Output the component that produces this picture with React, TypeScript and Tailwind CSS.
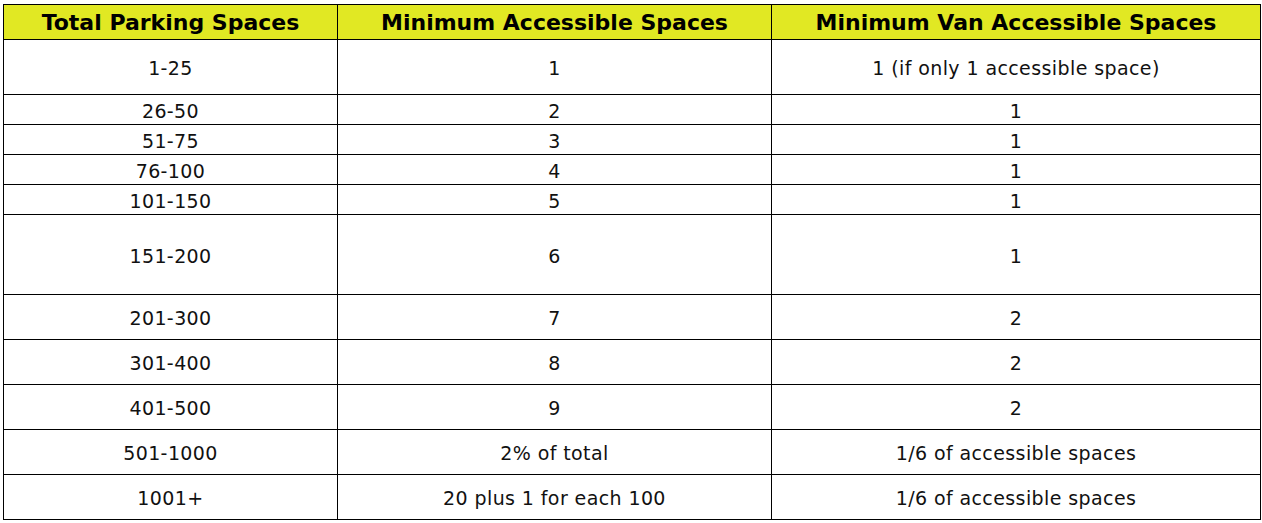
import React from "react";

const rows: { a: string; b: string; c: string; h: string }[] = [
  { a: "1-25", b: "1", c: "1 (if only 1 accessible space)", h: "h-[55px]" },
  { a: "26-50", b: "2", c: "1", h: "h-[30px]" },
  { a: "51-75", b: "3", c: "1", h: "h-[30px]" },
  { a: "76-100", b: "4", c: "1", h: "h-[30px]" },
  { a: "101-150", b: "5", c: "1", h: "h-[30px]" },
  { a: "151-200", b: "6", c: "1", h: "h-[80px]" },
  { a: "201-300", b: "7", c: "2", h: "h-[45px]" },
  { a: "301-400", b: "8", c: "2", h: "h-[45px]" },
  { a: "401-500", b: "9", c: "2", h: "h-[45px]" },
  { a: "501-1000", b: "2% of total", c: "1/6 of accessible spaces", h: "h-[45px]" },
  { a: "1001+", b: "20 plus 1 for each 100", c: "1/6 of accessible spaces", h: "h-[45px]" },
];

export default function App() {
  return (
    <div className="w-[1262px] h-[523px] bg-white pt-[4px] pl-[3px] font-['DejaVu_Sans',sans-serif] text-[#111]">
      <table className="border-collapse w-[1257px] table-fixed">
        <colgroup>
          <col className="w-[334px]" />
          <col className="w-[434px]" />
          <col className="w-[489px]" />
        </colgroup>
        <thead>
          <tr className="h-[35px] bg-[#e1e823]">
            <th className="border border-black p-0 pt-[1px] text-[22px] font-bold leading-none text-black">Total Parking Spaces</th>
            <th className="border border-black p-0 pt-[1px] text-[22px] font-bold leading-none text-black">Minimum Accessible Spaces</th>
            <th className="border border-black p-0 pt-[1px] text-[22px] font-bold leading-none text-black">Minimum Van Accessible Spaces</th>
          </tr>
        </thead>
        <tbody>
          {rows.map((r) => (
            <tr key={r.a} className={r.h}>
              <td className="border border-black p-0 pt-[3px] text-center text-[19px] tracking-[0.4px] leading-none">{r.a}</td>
              <td className="border border-black p-0 pt-[3px] text-center text-[19px] tracking-[0.4px] leading-none">{r.b}</td>
              <td className="border border-black p-0 pt-[3px] text-center text-[19px] tracking-[0.4px] leading-none">{r.c}</td>
            </tr>
          ))}
        </tbody>
      </table>
    </div>
  );
}
